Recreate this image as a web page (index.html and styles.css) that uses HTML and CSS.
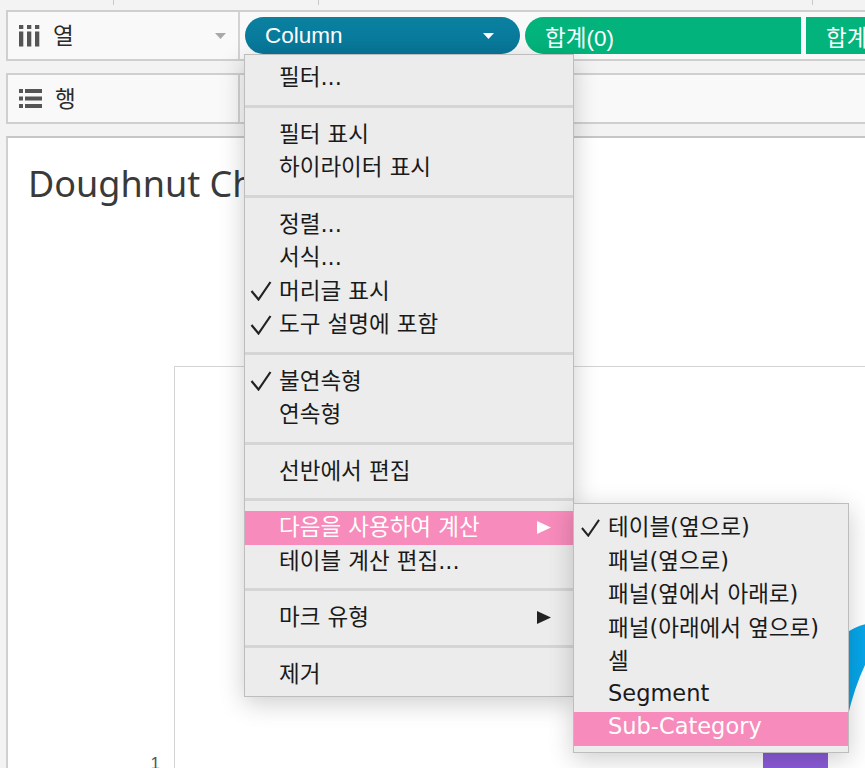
FILE: index.html
```html
<!DOCTYPE html>
<html lang="ko">
  <head>
    <meta charset="UTF-8" />
    <title>Doughnut Chart</title>
    <link rel="stylesheet" href="styles.css">
  </head>
  <body>
    <div class="ruler">
      <span class="tick tick-a"></span>
      <span class="tick tick-b"></span>
      <span class="tick tick-c"></span>
    </div>

    <div class="shelf">
      <div class="shelf-label">
        <svg class="shelf-icon" width="21" height="22" viewBox="0 0 21 22">
          <rect x="0" y="0" width="4.3" height="4" />
          <rect x="8" y="0" width="4.3" height="4" />
          <rect x="16" y="0" width="4.3" height="4" />
          <rect x="0" y="6.5" width="4.3" height="15" />
          <rect x="8" y="6.5" width="4.3" height="15" />
          <rect x="16" y="6.5" width="4.3" height="15" />
        </svg>
        <span class="shelf-name">열</span>
        <svg class="shelf-caret" width="11" height="6" viewBox="0 0 11 6"><polygon points="0,0 11,0 5.5,6" /></svg>
      </div>
      <div class="shelf-body">
        <div class="pill pill-dim">
          <span>Column</span>
          <svg class="pill-caret" width="11" height="6" viewBox="0 0 11 6"><polygon points="0,0 11,0 5.5,6" /></svg>
        </div>
        <div class="pill pill-sum">합계(0)</div>
        <div class="pill pill-sum pill-sum-cut">합계</div>
      </div>
    </div>

    <div class="shelf">
      <div class="shelf-label">
        <svg class="shelf-icon" width="23" height="19" viewBox="0 0 23 19">
          <rect x="0" y="0" width="4" height="4" />
          <rect x="6" y="0" width="17" height="4" />
          <rect x="0" y="7.5" width="4" height="4" />
          <rect x="6" y="7.5" width="17" height="4" />
          <rect x="0" y="15" width="4" height="4" />
          <rect x="6" y="15" width="17" height="4" />
        </svg>
        <span class="shelf-name">행</span>
      </div>
      <div class="shelf-body"></div>
    </div>

    <div class="view">
      <div class="view-title">Doughnut Chart</div>
      <div class="view-body">
        <div class="axis"><span>1</span></div>
        <div class="plot">
          <svg class="marks" width="700" height="410" viewBox="0 0 700 410">
            <path d="M655 282 Q670 262 691 257 L691 296 Q680 318 672 352 L655 378 Z" fill="#06a6ea" />
            <rect x="588" y="381" width="65" height="30" fill="#8c5bd8" />
          </svg>
        </div>
      </div>
    </div>

    <div class="menu context">
      <div class="item"><span class="mark"></span><span class="label">필터...</span></div>
      <div class="sep"></div>
      <div class="item"><span class="mark"></span><span class="label">필터 표시</span></div>
      <div class="item"><span class="mark"></span><span class="label">하이라이터 표시</span></div>
      <div class="sep"></div>
      <div class="item"><span class="mark"></span><span class="label">정렬...</span></div>
      <div class="item"><span class="mark"></span><span class="label">서식...</span></div>
      <div class="item">
        <span class="mark"><svg width="22" height="20" viewBox="0 0 22 20"><path d="M1.5 10 L8.5 18.5 L20.5 1" /></svg></span>
        <span class="label">머리글 표시</span>
      </div>
      <div class="item">
        <span class="mark"><svg width="22" height="20" viewBox="0 0 22 20"><path d="M1.5 10 L8.5 18.5 L20.5 1" /></svg></span>
        <span class="label">도구 설명에 포함</span>
      </div>
      <div class="sep"></div>
      <div class="item">
        <span class="mark"><svg width="22" height="20" viewBox="0 0 22 20"><path d="M1.5 10 L8.5 18.5 L20.5 1" /></svg></span>
        <span class="label">불연속형</span>
      </div>
      <div class="item"><span class="mark"></span><span class="label">연속형</span></div>
      <div class="sep"></div>
      <div class="item"><span class="mark"></span><span class="label">선반에서 편집</span></div>
      <div class="sep"></div>
      <div class="item active">
        <span class="mark"></span><span class="label">다음을 사용하여 계산</span>
        <svg class="arrow" width="14" height="13" viewBox="0 0 14 13"><polygon points="0,0 14,6.5 0,13" /></svg>
      </div>
      <div class="item"><span class="mark"></span><span class="label">테이블 계산 편집...</span></div>
      <div class="sep"></div>
      <div class="item">
        <span class="mark"></span><span class="label">마크 유형</span>
        <svg class="arrow" width="14" height="13" viewBox="0 0 14 13"><polygon points="0,0 14,6.5 0,13" /></svg>
      </div>
      <div class="sep"></div>
      <div class="item"><span class="mark"></span><span class="label">제거</span></div>
    </div>

    <div class="menu submenu">
      <div class="item">
        <span class="mark"><svg width="21" height="18" viewBox="0 0 22 20"><path d="M1.5 10 L8.5 18.5 L20.5 1" /></svg></span>
        <span class="label">테이블(옆으로)</span>
      </div>
      <div class="item"><span class="mark"></span><span class="label">패널(옆으로)</span></div>
      <div class="item"><span class="mark"></span><span class="label">패널(옆에서 아래로)</span></div>
      <div class="item"><span class="mark"></span><span class="label">패널(아래에서 옆으로)</span></div>
      <div class="item"><span class="mark"></span><span class="label">셀</span></div>
      <div class="item"><span class="mark"></span><span class="label">Segment</span></div>
      <div class="item active"><span class="mark"></span><span class="label">Sub-Category</span></div>
    </div>
  </body>
</html>
```

FILE: styles.css
```css
body {
  margin: 0;
  width: 865px;
  height: 768px;
  overflow: hidden;
  position: relative;
  background: #f3f3f3;
  font-family: "DejaVu Sans", "Noto Sans CJK KR", sans-serif;
}

/* top ruler */
.ruler {
  height: 10px;
  display: flex;
}
.tick {
  width: 1px;
  height: 5px;
  background: #c9c9c9;
}
.tick-a { margin-left: 113px; }
.tick-b { margin-left: 204px; }
.tick-c { margin-left: 493px; }

/* shelves */
.shelf {
  display: flex;
  height: 51px;
  box-sizing: border-box;
  margin-left: 6px;
  border: 2px solid #cfcfcf;
  border-right: 0;
  background: #f9f9f9;
}
.shelf + .shelf {
  margin-top: 12px;
}
.shelf-label {
  width: 232px;
  flex: none;
  box-sizing: border-box;
  display: flex;
  align-items: center;
  padding-left: 11px;
  border-right: 2px solid #d3d3d3;
}
.shelf-icon {
  fill: #555;
  flex: none;
}
.shelf-name {
  margin: 0 0 3px 13px;
  font-family: "Noto Sans CJK KR", sans-serif;
  font-size: 22.5px;
  color: #2b2b2b;
}
.shelf-caret {
  margin-left: auto;
  margin-right: 12px;
  fill: #a9a9a9;
}
.shelf-body {
  flex: 1;
  display: flex;
  align-items: center;
  gap: 5px;
  padding-left: 5px;
  min-width: 0;
}

.pill {
  flex: none;
  height: 37px;
  box-sizing: border-box;
  display: flex;
  align-items: center;
  padding: 0 20px;
  color: #fff;
  font-family: "Liberation Sans", "Noto Sans CJK KR", sans-serif;
  font-size: 22.5px;
}
.pill-dim {
  width: 275px;
  padding-right: 26px;
  border-radius: 19px;
  background: linear-gradient(#0a809f, #08779a);
}
.pill-caret {
  margin-left: auto;
  fill: #fff;
}
.pill-sum {
  width: 276px;
  border-radius: 19px 0 0 19px;
  background: #02b47b;
}
.pill-sum-cut {
  width: 100px;
  border-radius: 0;
}

/* view */
.view {
  margin: 12px 0 0 6px;
  height: 632px;
  box-sizing: border-box;
  background: #fff;
  border-top: 2px solid #c6c6c6;
  border-left: 2px solid #d0d0d0;
}
.view-title {
  padding: 24px 0 0 20px;
  font-family: "Noto Sans", sans-serif;
  font-size: 36px;
  line-height: 44px;
  color: #3a3a3a;
  white-space: nowrap;
}
.view-body {
  display: flex;
  margin-top: 160px;
  height: 410px;
}
.axis {
  width: 166px;
  flex: none;
  box-sizing: border-box;
  padding: 388px 14px 0 0;
  text-align: right;
  font-family: "Liberation Sans", sans-serif;
  font-size: 17px;
  line-height: 20px;
  color: #555;
}
.plot {
  flex: 1;
  border-left: 1px solid #d4d4d4;
  border-top: 1px solid #d4d4d4;
  overflow: hidden;
}
.marks {
  display: block;
}

/* context menu */
.menu {
  position: absolute;
  box-sizing: border-box;
  background: #ececec;
  border: 1px solid #bdbdbd;
  box-shadow: 0 6px 24px rgba(0, 0, 0, 0.2);
  font-size: 22.5px;
  color: #1a1a1a;
}
.context {
  left: 244px;
  top: 54px;
  width: 330px;
  padding: 6px 0 5px;
}
.submenu {
  left: 573px;
  top: 503px;
  width: 276px;
  padding: 7px 0 6.5px;
}
.item {
  height: 33.5px;
  display: flex;
  align-items: center;
  white-space: nowrap;
}
.item.active {
  background: #f78bbb;
  color: #fff;
}
.label {
  margin-bottom: 5px;
}
.mark {
  width: 34px;
  flex: none;
  box-sizing: border-box;
  display: flex;
  padding-left: 5px;
}
.submenu .mark {
  padding-left: 6px;
}
.mark svg {
  fill: none;
  stroke: #222;
  stroke-width: 2.2;
}
.arrow {
  margin-left: auto;
  margin-right: 22px;
  fill: #222;
}
.active .arrow {
  fill: #fff;
}
.sep {
  height: 3px;
  margin: 10px 0;
  background: #d5d5d5;
}
```
